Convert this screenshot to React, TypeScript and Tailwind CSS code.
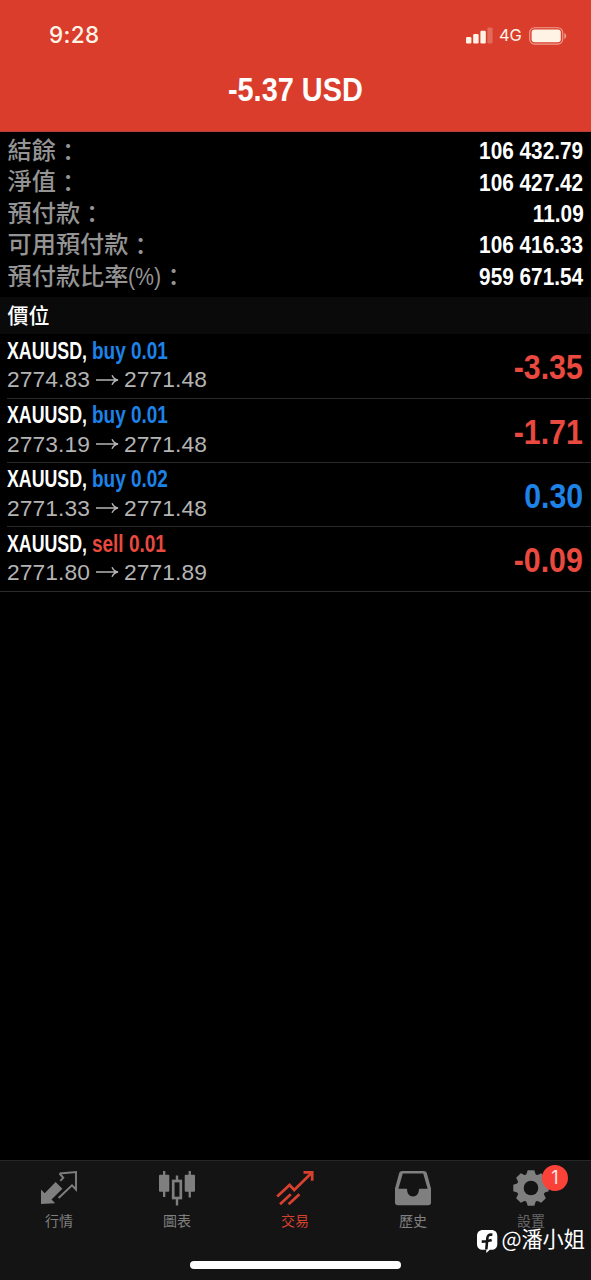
import type { ReactNode } from "react";

type Side = "buy" | "sell";

type Position = {
  id: number;
  symbol: string;
  side: Side;
  volume: string;
  open: string;
  current: string;
  profit: string;
};

const balances: { label: string; suffix?: string; value: string }[] = [
  { label: "結餘", value: "106 432.79" },
  { label: "淨值", value: "106 427.42" },
  { label: "預付款", value: "11.09" },
  { label: "可用預付款", value: "106 416.33" },
  { label: "預付款比率", suffix: "(%)", value: "959 671.54" },
];

const positions: Position[] = [
  { id: 1, symbol: "XAUUSD", side: "buy", volume: "0.01", open: "2774.83", current: "2771.48", profit: "-3.35" },
  { id: 2, symbol: "XAUUSD", side: "buy", volume: "0.01", open: "2773.19", current: "2771.48", profit: "-1.71" },
  { id: 3, symbol: "XAUUSD", side: "buy", volume: "0.02", open: "2771.33", current: "2771.48", profit: "0.30" },
  { id: 4, symbol: "XAUUSD", side: "sell", volume: "0.01", open: "2771.80", current: "2771.89", profit: "-0.09" },
];

function StatusBar() {
  return (
    <div className="flex h-[71px] items-center justify-between pl-[49px] pr-[24px] text-[#fff3e6]">
      <div className="font-['Inter'] text-[22.5px] font-medium leading-none tracking-[0.4px]">9:28</div>
      <div className="flex items-center">
        <svg width="27" height="17" viewBox="0 0 27 17" fill="currentColor">
          <rect x="0" y="10" width="5.4" height="6.5" rx="1.2" />
          <rect x="7.2" y="7" width="5.4" height="9.5" rx="1.2" />
          <rect x="14.4" y="3.8" width="5.4" height="12.7" rx="1.2" />
          <rect x="21.4" y="0.5" width="5.2" height="16" rx="1.2" opacity="0.25" />
        </svg>
        <span className="ml-[6px] w-[24px] font-['Inter'] text-[16.5px] leading-none tracking-[-0.1px]">4G</span>
        <svg className="ml-[6px]" width="38" height="18" viewBox="0 0 38 18">
          <rect x="0.7" y="0.7" width="33" height="16.4" rx="4.8" fill="none" stroke="currentColor" strokeWidth="1.1" opacity="0.55" />
          <rect x="2.6" y="2.6" width="29.2" height="12.6" rx="3" fill="currentColor" />
          <path d="M35.3 6v6c1.2-.5 1.9-1.6 1.9-3s-.7-2.5-1.9-3z" fill="currentColor" opacity="0.55" />
        </svg>
      </div>
    </div>
  );
}

function PositionRow({ position, last }: { position: Position; last: boolean }) {
  const { symbol, side, volume, open, current, profit } = position;
  return (
    <div className={last ? "border-b border-[#2a2a2a]" : ""}>
      <div
        className={`ml-[7px] flex h-[64.2px] items-start justify-between pr-2 ${last ? "" : "border-b border-[#2a2a2a]"}`}
      >
        <div>
          <div className="mt-[2.4px] flex h-[28px] items-center text-[24px] font-bold">
            <span className="w-[85px] origin-left scale-x-[0.74] whitespace-nowrap text-white">{symbol},</span>
            <span
              className={`origin-left scale-x-[0.79] whitespace-nowrap ${side === "buy" ? "text-[#1d83e8]" : "text-[#e9493f]"}`}
            >
              {side} {volume}
            </span>
          </div>
          <div className="mt-[0.6px] flex h-[28px] items-center text-[22.8px] tracking-[0.1px] text-[#b4b4b4]">
            <span className="w-[83px]">{open}</span>
            <svg className="ml-[5px] mr-[5px]" width="24" height="14" viewBox="0 0 24 14" fill="none" stroke="currentColor" strokeWidth="1.4">
              <path d="M1 7h22M17 2.2c1.2 2.6 3.2 4.2 6 4.8-2.8.6-4.8 2.2-6 4.8" />
            </svg>
            <span>{current}</span>
          </div>
        </div>
        <div
          className={`mt-[15.8px] origin-right scale-x-[0.865] text-[35px] font-bold leading-[34px] ${profit.startsWith("-") ? "text-[#e9493f]" : "text-[#1d83e8]"}`}
        >
          {profit}
        </div>
      </div>
    </div>
  );
}

function QuotesIcon() {
  return (
    <svg width="38" height="36" viewBox="0 0 38 36">
      <path d="M1 34V19.5l3.7 3.7L15.6 12.1l6.8 6.7L11.5 29.6l3.7 3.7z" fill="currentColor" />
      <path d="M19.5 3.5L36 2v17.5l-4-4.2L18.6 28M19.5 3.5l3.8 4.3-3 3.1" fill="none" stroke="currentColor" strokeWidth="1.9" />
    </svg>
  );
}

function ChartIcon() {
  return (
    <svg width="38" height="36" viewBox="0 0 38 36" fill="currentColor">
      <path d="M5 1h2.3v26H5zM30.6 1h2.3v26.500h-2.300zM17.8 5.500h2.400v6h-2.400zM17.800 28h2.400v7.500h-2.400z" />
      <rect x="1" y="4.7" width="10.3" height="17" rx="1" />
      <rect x="26.7" y="4.7" width="10.3" height="17" rx="1" />
      <rect x="15.2" y="11" width="7.6" height="17" fill="none" stroke="currentColor" strokeWidth="2.7" />
    </svg>
  );
}

function TradeIcon() {
  return (
    <svg width="38" height="36" viewBox="0 0 38 36" fill="none" stroke="currentColor" strokeWidth="2.7">
      <path d="M1.2 26.5L13.6 15l4.6 5L35 3.5" />
      <path d="M27.5 2.3h8.7v8.5" />
      <path d="M4 34.2l10.8-10M12.6 34.2l10.8-10" />
    </svg>
  );
}

function HistoryIcon() {
  return (
    <svg width="38" height="36" viewBox="0 0 38 36">
      <path
        fillRule="evenodd"
        fill="currentColor"
        d="M8.3 1h21.4c1.6 0 2.6.8 3.2 2.2L37 18.5v14c0 1.800-1 2.800-2.800 2.800H3.800C2 35.300 1 34.300 1 32.500v-14L5.100 3.200C5.700 1.800 6.700 1 8.300 1zM8.800 3.600L4.400 18.700h7.900c.5 0 .8.300.8.800 0 4 2.200 7 5.900 7s5.900-3 5.900-7c0-.5.300-.8.800-.8h7.900L29.200 3.600z"
      />
    </svg>
  );
}

function SettingsIcon() {
  return (
    <svg width="38" height="36" viewBox="0 0 38 36">
      <g fill="currentColor" transform="translate(19 18)">
        {[0, 45, 90, 135].map((deg) => (
          <path key={deg} transform={`rotate(${deg})`} d="M-3.3-17.7h6.6l2 6v23.4l-2 6h-6.6l-2-6v-23.4z" />
        ))}
        <circle r="14.3" />
        <circle r="7.3" fill="#141414" />
      </g>
    </svg>
  );
}

function Tab({ icon, label, active, badge }: { icon: ReactNode; label: string; active?: boolean; badge?: number }) {
  return (
    <div className={`flex flex-1 flex-col items-center pt-[9px] ${active ? "text-[#d8402f]" : "text-[#7f7f7f]"}`}>
      <div className="relative">
        {icon}
        {badge && (
          <div className="absolute -top-[5px] left-[30px] flex size-[26px] items-center justify-center rounded-full bg-[#fb4238] font-['Inter'] text-[18px] leading-none text-[#ffe9e6]">
            {badge}
          </div>
        )}
      </div>
      <div className={`mt-[5px] text-[14px] leading-[20px] ${badge ? "text-[#666]" : ""}`}>{label}</div>
    </div>
  );
}

export default function App() {
  return (
    <div className="relative flex h-[1280px] w-[591px] flex-col overflow-hidden bg-black font-['Liberation_Sans','Noto_Sans_CJK_TC',sans-serif]">
      <header className="h-[132px] shrink-0 border-b border-[#b94038] bg-[#da3d2c]">
        <StatusBar />
        <div className="flex justify-center">
          <span className="scale-x-[0.85] text-[34px] font-bold leading-[36px] text-white">-5.37 USD</span>
        </div>
      </header>

      <section className="h-[165px] shrink-0 pl-[7.5px] pr-[7.5px] pt-[3.5px]">
        {balances.map((b) => (
          <div key={b.label} className="flex h-[31.4px] items-center justify-between">
            <div className="flex items-center text-[24.2px] font-medium leading-none text-[#949494]">
              {b.label}
              {b.suffix && <span className="w-[33px] origin-left scale-x-[0.88]">{b.suffix}</span>}
              <span className="pt-[3px]">：</span>
            </div>
            <div className="origin-right scale-x-[0.866] text-[24px] font-bold leading-none text-white">{b.value}</div>
          </div>
        ))}
      </section>

      <div className="flex h-[37px] shrink-0 items-center bg-[#0a0a0a] pl-[7.5px] pt-px text-[21px] font-medium text-white">價位</div>

      <main className="flex-1 pt-[0.6px]">
        {positions.map((p, i) => (
          <PositionRow key={p.id} position={p} last={i === positions.length - 1} />
        ))}
      </main>

      <nav className="flex h-[120px] shrink-0 border-t border-[#262626] bg-[#141414] pr-[1px]">
        <Tab icon={<QuotesIcon />} label="行情" />
        <Tab icon={<ChartIcon />} label="圖表" />
        <Tab icon={<TradeIcon />} label="交易" active />
        <Tab icon={<HistoryIcon />} label="歷史" />
        <Tab icon={<SettingsIcon />} label="設置" badge={1} />
      </nav>

      {/* home indicator */}
      <div className="absolute bottom-[11px] left-[190px] h-[8px] w-[211px] rounded-full bg-white" />

      {/* author tag */}
      <div className="absolute bottom-[27px] right-[6px] flex items-center text-white">
        <svg className="mt-[7px]" width="21" height="23" viewBox="0 0 21 23">
          <path d="M6 0h8.5C18 0 20.3 2.3 20.3 6v8c0 3.6-2.3 5.8-5.8 5.8h-1.700L9.300 23V19.800H6c-3.700 0-6-2.200-6-5.800V6c0-3.700 2.300-6 6-6z" fill="#fff" />
          <path d="M15.4 4.800c-3.400-.6-4.900.6-5.100 3.700L9.300 19.500M4.700 11.600c3.300 0 6.600-.5 10-1.600" fill="none" stroke="#141414" strokeWidth="2.6" />
        </svg>
        <span className="ml-[3px] font-['Noto_Sans_CJK_TC'] text-[21.2px] leading-[28px]">@潘小姐</span>
      </div>
    </div>
  );
}
